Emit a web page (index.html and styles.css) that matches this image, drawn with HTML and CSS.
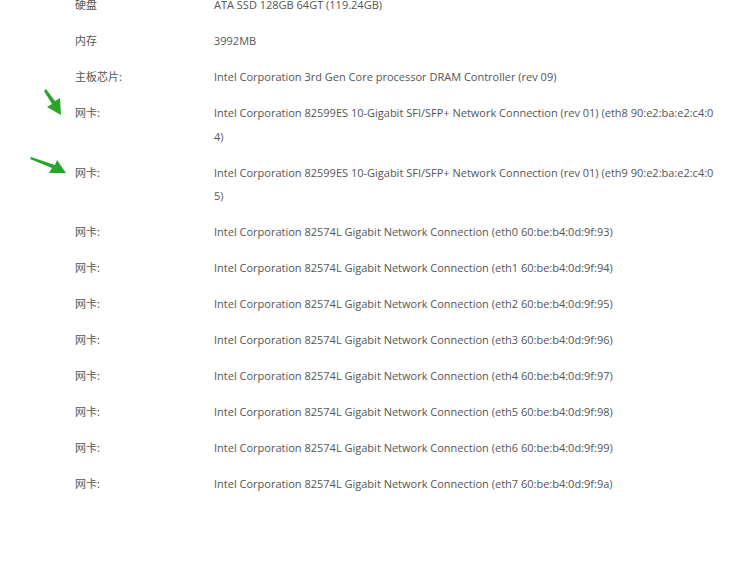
FILE: index.html
```html
<!DOCTYPE html>
<html lang="zh-CN">
<head>
<meta charset="utf-8">
<title>硬件信息</title>
<link rel="stylesheet" href="styles.css">
</head>
<body>
<div class="page">
  <div class="table">
    <div class="row"><div class="label">硬盘</div><div class="value">ATA SSD 128GB 64GT (119.24GB)</div></div>
    <div class="row"><div class="label">内存</div><div class="value">3992MB</div></div>
    <div class="row"><div class="label">主板芯片:</div><div class="value">Intel Corporation 3rd Gen Core processor DRAM Controller (rev 09)</div></div>
    <div class="row"><div class="label">网卡:<svg class="arrow arrow-a" width="40" height="40" viewBox="0 0 40 40"><path d="M7 2 L15 15 L10 18 L24 26 L23 9 L18 12 L9 0 Z" fill="#2aa52a"/></svg></div><div class="value">Intel Corporation 82599ES 10-Gigabit SFI/SFP+ Network Connection (rev 01) (eth8 90:e2:ba:e2:c4:04)</div></div>
    <div class="row"><div class="label">网卡:<svg class="arrow arrow-b" width="50" height="30" viewBox="0 0 50 30"><path d="M0 2 L22 11 L19 16 L36 16 L27 3 L25 8 L1 0 Z" fill="#2aa52a"/></svg></div><div class="value">Intel Corporation 82599ES 10-Gigabit SFI/SFP+ Network Connection (rev 01) (eth9 90:e2:ba:e2:c4:05)</div></div>
    <div class="row"><div class="label">网卡:</div><div class="value">Intel Corporation 82574L Gigabit Network Connection (eth0 60:be:b4:0d:9f:93)</div></div>
    <div class="row"><div class="label">网卡:</div><div class="value">Intel Corporation 82574L Gigabit Network Connection (eth1 60:be:b4:0d:9f:94)</div></div>
    <div class="row"><div class="label">网卡:</div><div class="value">Intel Corporation 82574L Gigabit Network Connection (eth2 60:be:b4:0d:9f:95)</div></div>
    <div class="row"><div class="label">网卡:</div><div class="value">Intel Corporation 82574L Gigabit Network Connection (eth3 60:be:b4:0d:9f:96)</div></div>
    <div class="row"><div class="label">网卡:</div><div class="value">Intel Corporation 82574L Gigabit Network Connection (eth4 60:be:b4:0d:9f:97)</div></div>
    <div class="row"><div class="label">网卡:</div><div class="value">Intel Corporation 82574L Gigabit Network Connection (eth5 60:be:b4:0d:9f:98)</div></div>
    <div class="row"><div class="label">网卡:</div><div class="value">Intel Corporation 82574L Gigabit Network Connection (eth6 60:be:b4:0d:9f:99)</div></div>
    <div class="row"><div class="label">网卡:</div><div class="value">Intel Corporation 82574L Gigabit Network Connection (eth7 60:be:b4:0d:9f:9a)</div></div>
  </div>
</div>
</body>
</html>
```
FILE: styles.css
```css
html, body {
  margin: 0;
  padding: 0;
  background: #ffffff;
}
body {
  width: 743px;
  height: 567px;
  overflow: hidden;
  font-family: "Open Sans", "Noto Sans CJK SC", sans-serif;
  font-size: 11px;
  color: #555555;
}
.page {
  padding-left: 75px;
  margin-top: -13px;
}
.table {
  display: flex;
  flex-direction: column;
}
.row {
  display: grid;
  grid-template-columns: 139px 505px;
  padding: 6.25px 0;
  line-height: 23.5px;
}
.label {
  position: relative;
  font-family: "Noto Sans CJK SC", sans-serif;
}
.value {
  word-break: break-all;
}
.arrow {
  position: absolute;
}
.arrow-a {
  left: -38px;
  top: -12px;
}
.arrow-b {
  left: -45px;
  top: -4px;
}
```
